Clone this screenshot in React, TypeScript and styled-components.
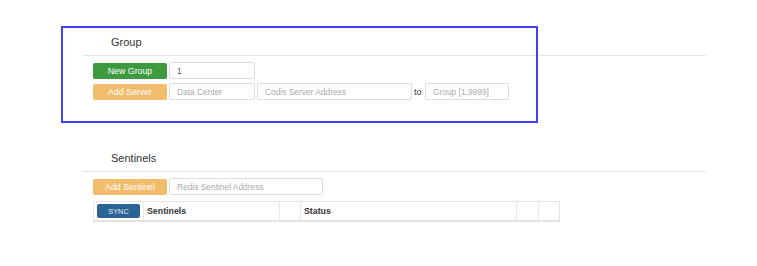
import React from "react";
import styled, { createGlobalStyle } from "styled-components";

const GlobalStyle = createGlobalStyle`
  body {
    margin: 0;
    background: #fff;
    font-family: "Liberation Sans", Arial, sans-serif;
    color: #333;
  }
`;

const Page = styled.div`
  position: relative;
  width: 757px;
  height: 266px;
  padding-left: 83px;
  box-sizing: border-box;
`;

const Section = styled.section<{ $top: number }>`
  width: 623px;
  padding-top: ${(p) => p.$top}px;
`;

const SectionHeader = styled.div`
  padding: 0 0 4px 28px;
  border-bottom: 1px solid #e5e5e5;
  font-size: 11px;
  line-height: 18px;
  color: #333;
`;

const Body = styled.div`
  display: flex;
  flex-direction: column;
  gap: 4px;
  padding: 6px 0 0 10px;
`;

const Row = styled.div`
  display: flex;
  align-items: center;
  gap: 2px;
`;

const Button = styled.button<{ $variant: "success" | "warning" }>`
  width: 74px;
  height: 16px;
  padding: 0;
  border: none;
  border-radius: 2px;
  font-family: inherit;
  font-size: 8.8px;
  color: #fff;
  background: ${(p) => (p.$variant === "success" ? "#3e9a3e" : "#f2bc6c")};
`;

const Input = styled.input<{ $width: number }>`
  width: ${(p) => p.$width}px;
  height: 17px;
  box-sizing: border-box;
  padding: 0 7px;
  border: 1px solid #dcdcdc;
  border-radius: 2px;
  font-family: inherit;
  font-size: 8.4px;
  color: #555;
  outline: none;
  &::placeholder {
    color: #aaa;
  }
`;

const To = styled.span`
  width: 9px;
  font-size: 9px;
  color: #333;
`;

const Table = styled.table`
  margin-top: 2px;
  border-collapse: collapse;
  table-layout: fixed;
  width: 466px;
  height: 21px;
  border: 1px solid #e3e3e3;
  border-bottom: 2px solid #e3e3e3;
  font-size: 8.8px;
`;

const Th = styled.th<{ $width: number }>`
  width: ${(p) => p.$width}px;
  box-sizing: border-box;
  padding: 0 3px;
  border-left: 1px solid #e8e8e8;
  text-align: left;
  font-weight: bold;
  color: #333;
`;

const SyncButton = styled.button`
  width: 43px;
  height: 14px;
  padding: 0;
  border: none;
  border-radius: 2px;
  background: #2b6396;
  color: #e8eef5;
  font-family: inherit;
  font-size: 7.4px;
`;

const Highlight = styled.div`
  position: absolute;
  left: 61px;
  top: 26px;
  width: 477px;
  height: 97px;
  box-sizing: border-box;
  border: 2px solid #4040f8;
  pointer-events: none;
`;

export default function App() {
  return (
    <>
      <GlobalStyle />
      <Page>
        <Section $top={33}>
          <SectionHeader>Group</SectionHeader>
          <Body>
            <Row>
              <Button $variant="success">New Group</Button>
              <Input $width={86} defaultValue="1" />
            </Row>
            <Row>
              <Button $variant="warning">Add Server</Button>
              <Input $width={86} placeholder="Data Center" />
              <Input $width={155} placeholder="Codis Server Address" />
              <To>to</To>
              <Input $width={84} placeholder="Group [1,9999]" />
            </Row>
          </Body>
        </Section>
        <Section $top={49}>
          <SectionHeader>Sentinels</SectionHeader>
          <Body>
            <Row>
              <Button $variant="warning">Add Sentinel</Button>
              <Input $width={154} placeholder="Redis Sentinel Address" />
            </Row>
            <Table>
              <thead>
                <tr>
                  <Th $width={50}>
                    <SyncButton>SYNC</SyncButton>
                  </Th>
                  <Th $width={136}>Sentinels</Th>
                  <Th $width={21} />
                  <Th $width={216}>Status</Th>
                  <Th $width={22} />
                  <Th $width={21} />
                </tr>
              </thead>
            </Table>
          </Body>
        </Section>
        <Highlight />
      </Page>
    </>
  );
}
